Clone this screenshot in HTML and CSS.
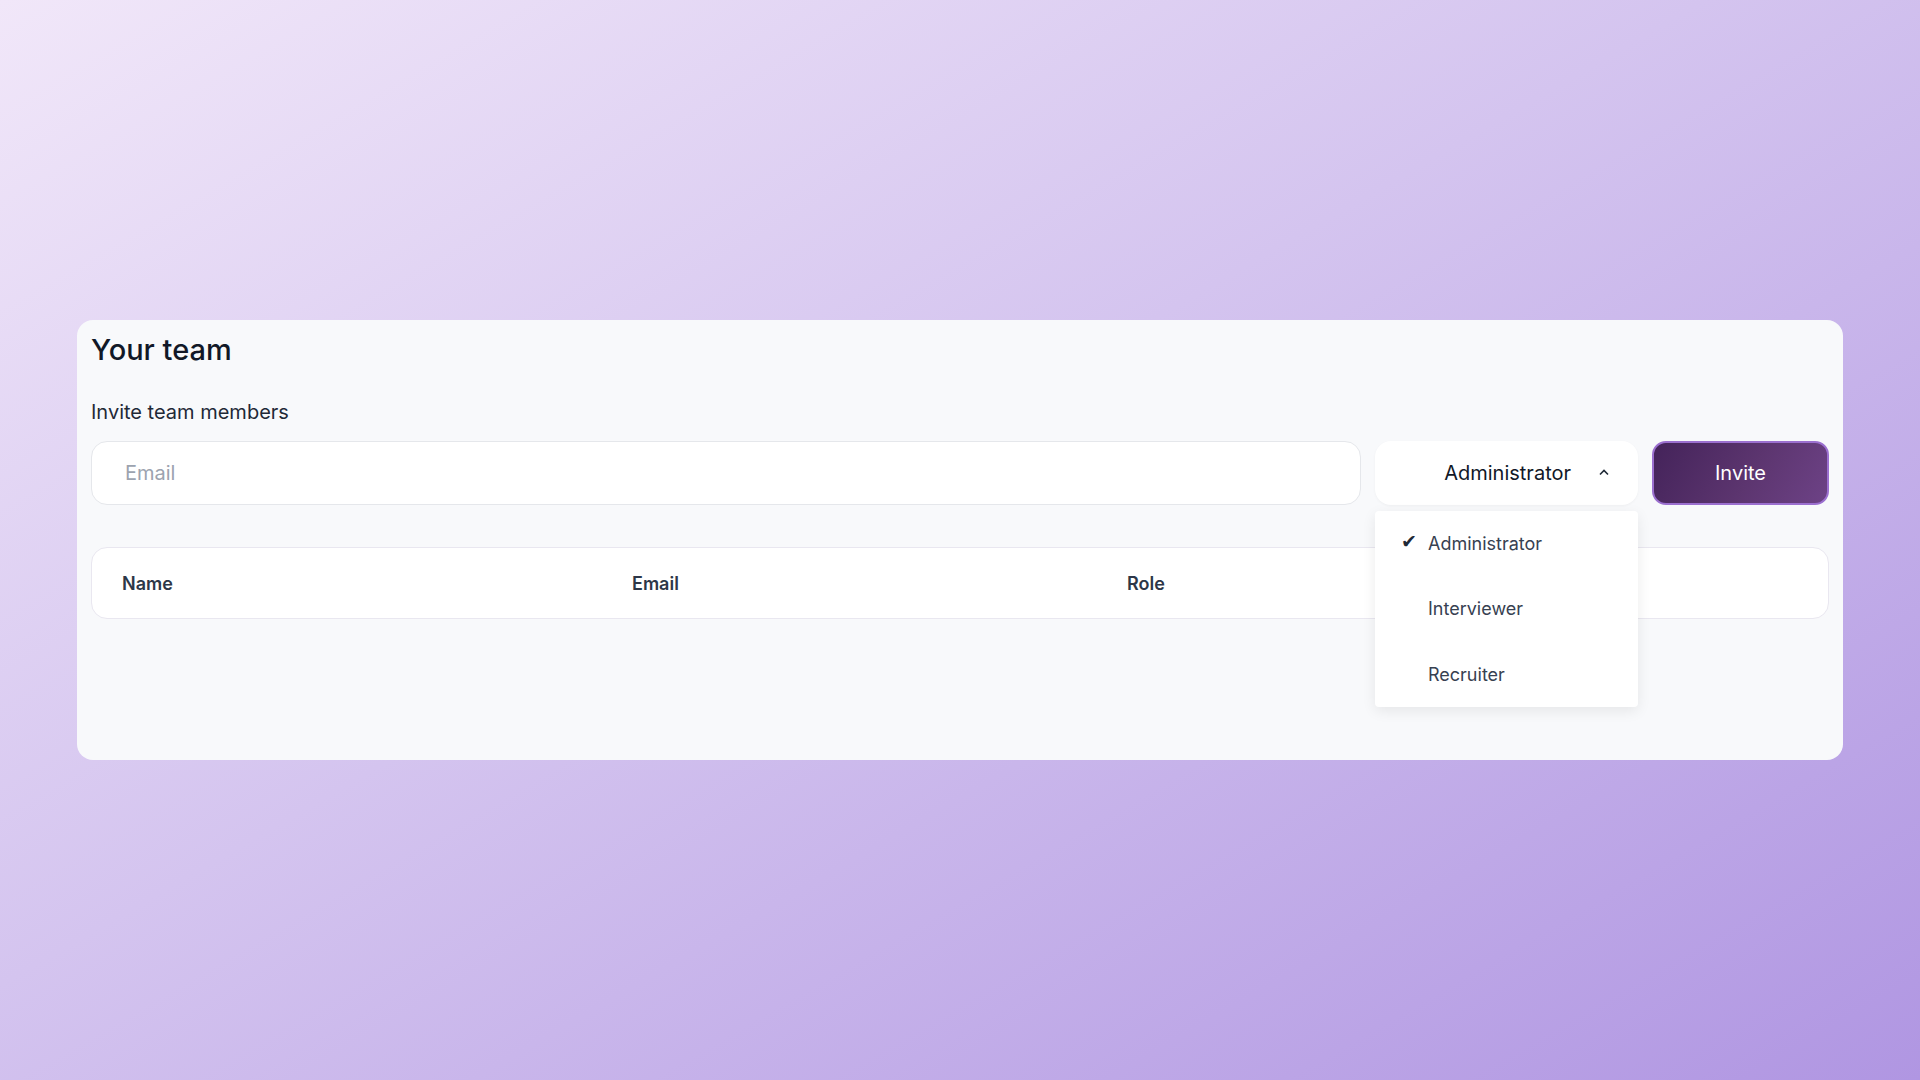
FILE: index.html
```html
<!DOCTYPE html>
<html lang="en">

<head>
    <meta charset="UTF-8">
    <meta name="viewport" content="width=device-width, initial-scale=1.0">
    <title>Your team</title>
    <link rel="stylesheet" href="styles.css">
</head>

<body>
    <div class="card">
        <h1 class="title">Your team</h1>
        <label class="inviteLabel" for="email">Invite team members</label>
        <div class="inviteRow">
            <input type="text" id="email" class="emailInput" placeholder="Email">
            <div class="roleSelect">
                <button class="roleBtn">
                    <span>Administrator</span>
                    <svg class="chevron" width="12" height="8" viewBox="0 0 12 8">
                        <path d="M2 6.5 L6 2.5 L10 6.5" fill="none" stroke="#1f2937" stroke-width="1.6" />
                    </svg>
                </button>
                <ul class="roleMenu">
                    <li class="roleItem"><span class="check">&#10004;</span>Administrator</li>
                    <li class="roleItem"><span class="check"></span>Interviewer</li>
                    <li class="roleItem"><span class="check"></span>Recruiter</li>
                </ul>
            </div>
            <button class="inviteBtn">Invite</button>
        </div>

        <div class="teamTable">
            <div class="col">Name</div>
            <div class="col">Email</div>
            <div class="col">Role</div>
        </div>
    </div>
</body>

</html>
```

FILE: styles.css
```css
html,
body {
    height: 100%;
}

body {
    margin: 0;
    font-family: Inter, "Noto Sans", sans-serif;
    background: linear-gradient(150deg, #f1e7f9 0%, #d4c4ef 45%, #b096e2 100%);
    display: flex;
    flex-direction: column;
}

.card {
    margin: 320px 77px 0 77px;
    height: 440px;
    box-sizing: border-box;
    background-color: #f8f9fb;
    border-radius: 16px;
    padding: 10px 14px;
}

.title {
    margin: 0;
    font-size: 29px;
    font-weight: 500;
    color: #111827;
    line-height: 40px;
}

.inviteLabel {
    display: block;
    margin-top: 28px;
    font-size: 20px;
    color: #1f2937;
    line-height: 28px;
}

.inviteRow {
    display: flex;
    gap: 14px;
    margin-top: 15px;
    height: 64px;
}

.emailInput {
    flex: 1;
    box-sizing: border-box;
    border: 1px solid #e5e7eb;
    border-radius: 16px;
    background: white;
    padding: 0 33px;
    font-family: inherit;
    font-size: 20px;
    outline: none;
}

.emailInput::placeholder {
    color: #9ca3af;
}

.roleSelect {
    position: relative;
    width: 263px;
}

.roleBtn {
    width: 100%;
    height: 100%;
    border: none;
    border-radius: 16px;
    background: white;
    box-shadow: 0 1px 3px rgba(0, 0, 0, 0.04);
    display: flex;
    align-items: center;
    justify-content: flex-end;
    gap: 27px;
    padding: 0 28px 0 0;
    font-family: inherit;
    font-size: 20px;
    color: #111827;
}

.chevron {
    margin-top: -2px;
}

.roleMenu {
    position: absolute;
    top: 70px;
    left: 0;
    right: 0;
    margin: 0;
    padding: 0;
    list-style: none;
    background: white;
    border-radius: 4px;
    box-shadow: 0 4px 14px rgba(0, 0, 0, 0.08);
    z-index: 2;
}

.roleItem {
    display: flex;
    align-items: center;
    height: 66px;
    padding-left: 26px;
    font-size: 18px;
    color: #374151;
}

.roleItem:first-child {
    height: 64px;
}

.check {
    width: 27px;
    font-size: 19px;
    color: #1f2937;
    margin-top: -4px;
}

.inviteBtn {
    width: 177px;
    border: 2px solid #9b6fcf;
    border-radius: 14px;
    background: linear-gradient(120deg, #44235a 0%, #5c356f 55%, #6d4286 100%);
    color: white;
    font-family: inherit;
    font-size: 20px;
}

.teamTable {
    margin-top: 42px;
    height: 72px;
    box-sizing: border-box;
    background: white;
    border: 1px solid #e9e7f0;
    border-radius: 16px;
    display: grid;
    grid-template-columns: 510px 495px 1fr;
    align-items: center;
    padding-left: 30px;
}

.col {
    font-size: 18px;
    font-weight: 600;
    color: #2d3748;
}
```
